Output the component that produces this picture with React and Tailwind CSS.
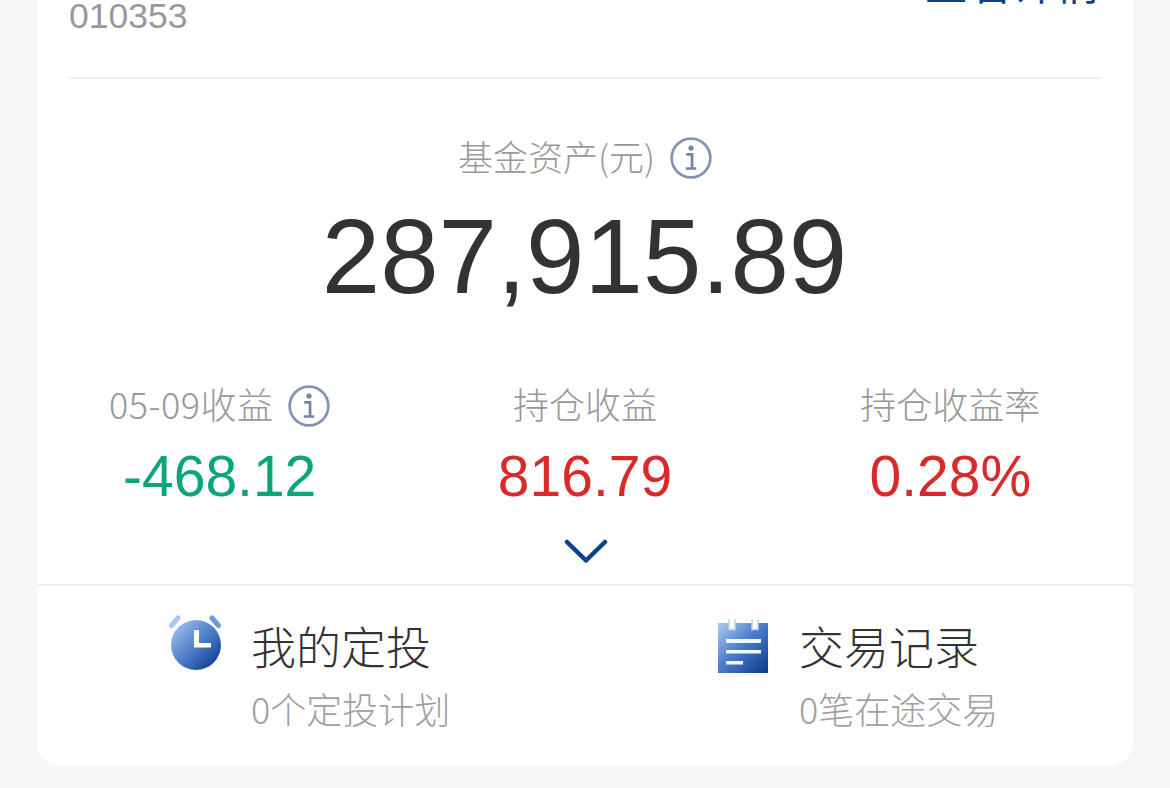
import React from "react";

const font = { fontFamily: '"Liberation Sans", "Noto Sans CJK SC", sans-serif' };
const cjk = { fontFamily: '"Noto Sans CJK SC", sans-serif' };

function Info({ className }) {
  return (
    <svg viewBox="0 0 40 40" className={className} fill="none">
      <circle cx="20" cy="20" r="18.4" stroke="#8493b3" strokeWidth="2.6" />
      <circle cx="20" cy="10.500" r="2.500" fill="#7485a8" />
      <path d="M15.500 16.500h5.500v13.200M15 30h10" stroke="#7485a8" strokeWidth="2.600" />
    </svg>
  );
}

function Clock() {
  return (
    <svg viewBox="0 0 52 56" className="w-[52px] h-[56px] shrink-0 ml-[-1px]">
      <defs>
        <linearGradient id="cg" x1="0.1" y1="0.1" x2="0.9" y2="0.9">
          <stop offset="0" stopColor="#9abcec" />
          <stop offset="0.5" stopColor="#4f80ca" />
          <stop offset="1" stopColor="#0f3f92" />
        </linearGradient>
      </defs>
      <path d="M2.500 10.500 L9 3" stroke="#a9c6ef" strokeWidth="5" strokeLinecap="round" />
      <path d="M43 3 L49.500 10.500" stroke="#6d9ad8" strokeWidth="5" strokeLinecap="round" />
      <circle cx="27" cy="30" r="25" fill="url(#cg)" />
      <path d="M25 15h5v13h12v4.500H25z" fill="#fff" />
    </svg>
  );
}

function Notepad() {
  return (
    <svg viewBox="0 0 50 54" className="w-[50px] h-[54px] shrink-0 mt-[4px]">
      <defs>
        <linearGradient id="ng" x1="0" y1="0" x2="1" y2="1">
          <stop offset="0" stopColor="#aecbf2" />
          <stop offset="0.45" stopColor="#4c7fca" />
          <stop offset="1" stopColor="#0b3a8c" />
        </linearGradient>
      </defs>
      <rect x="0" y="4" width="50" height="50" fill="url(#ng)" />
      <path d="M11 0v10.500h6V0M34 0v10.500h6V0" fill="#fff" stroke="#bcd3f3" strokeWidth="1.500" />
      <path d="M8 20h35v4H8zM8 31h35v3.500H8zM8 42h17v3.500H8z" fill="#f4f8fe" />
    </svg>
  );
}

function Stat({ label, value, color, info, labelClass }) {
  return (
    <div className="flex flex-col items-center">
      <div className="flex items-center h-[50px] text-[36px] text-[#999999] font-light leading-none" style={cjk}>
        <span className={`pb-[6px] ${labelClass || ""}`}>{label}</span>
        {info && <Info className="w-[42px] h-[42px] ml-[15px]" />}
      </div>
      <div className={`mt-[14px] text-[57px] leading-[62px] ${color}`}>{value}</div>
    </div>
  );
}

function Action({ icon, title, sub, className }) {
  return (
    <div className={`flex items-start ${className}`}>
      <div className="mt-[29px] w-[81px] shrink-0">{icon}</div>
      <div className="flex flex-col">
        <div className="mt-[30px] text-[45px] leading-[60px] text-[#333333] font-light whitespace-nowrap" style={cjk}>{title}</div>
        <div className="mt-[10px] text-[36px] leading-[44px] text-[#a0a0a0] font-light whitespace-nowrap" style={cjk}>{sub}</div>
      </div>
    </div>
  );
}

export default function App() {
  return (
    <div className="h-[788px] w-[1170px] overflow-hidden bg-[#f6f6f6] px-[37px]" style={font}>
      <div className="bg-white rounded-b-[24px] h-[766px] flex flex-col">
        <div className="mx-[32px] h-[79px] border-b-2 border-[#eeeeee] flex justify-between items-start">
          <div className="text-[35.500px] leading-[40px] mt-[-4px] text-[#999999]">010353</div>
          <div className="text-[44px] leading-[60px] mt-[-49px] mr-[1px] text-[#0b3f8f]" style={cjk}>查看详情</div>
        </div>
        <div className="flex items-center justify-center mt-[54px] h-[50px] text-[35px] text-[#999999] font-light leading-none" style={cjk}>
          <span className="pb-[6px]">基金资产(元)</span>
          <Info className="w-[42px] h-[42px] ml-[15px]" />
        </div>
        <div className="text-center mt-[14px] pr-[1px] text-[105px] leading-[120px] text-[#333333]">287,915.89</div>
        <div className="grid grid-cols-3 mt-[64px]">
          <Stat label="05-09收益" value="-468.12" color="text-[#0ba678]" info labelClass="tracking-[0.5px]" />
          <Stat label="持仓收益" value="816.79" color="text-[#d92a2a]" />
          <Stat label="持仓收益率" value="0.28%" color="text-[#d92a2a]" />
        </div>
        <div className="flex justify-center mt-[32px] pl-[2px]">
          <svg viewBox="0 0 44 26" className="w-[44px] h-[26px]" fill="none">
            <path d="M3 3 L22 21.500 L41 3" stroke="#0b3f8f" strokeWidth="4.500" strokeLinecap="round" strokeLinejoin="round" />
          </svg>
        </div>
        <div className="mt-[19px] flex-1 border-t-2 border-[#f0f0f0] flex">
          <Action className="pl-[133px] w-[548px]" icon={<Clock />} title="我的定投" sub="0个定投计划" />
          <Action className="pl-[133px] w-[548px]" icon={<Notepad />} title="交易记录" sub="0笔在途交易" />
        </div>
      </div>
    </div>
  );
}
